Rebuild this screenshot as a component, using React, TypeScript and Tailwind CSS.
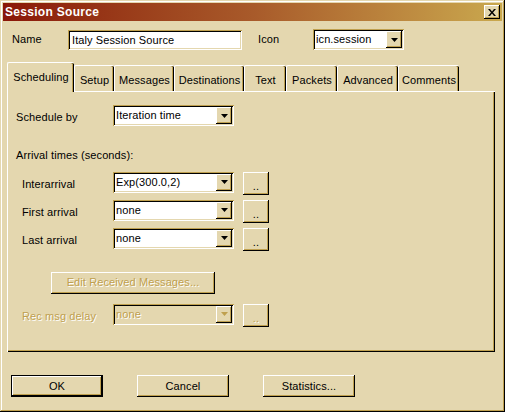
const FACE = 'bg-[#e4d7af]'

const raised =
  'shadow-[inset_-1px_-1px_0_#000,inset_1px_1px_0_#fff,inset_-2px_-2px_0_#bfa04f]'
const sunken =
  'shadow-[inset_1px_1px_0_#bfa04f,inset_-1px_-1px_0_#fff,inset_2px_2px_0_#000,inset_-2px_-2px_0_#e4d7af]'
const disabledText = 'text-[#bfa04f] [text-shadow:1px_1px_0_#fff]'

function Arrow({ disabled }: { disabled?: boolean }) {
  return (
    <div
      className={`flex h-full w-[16px] items-center justify-center ${FACE} ${raised}`}
    >
      <svg width="7" height="4" viewBox="0 0 7 4">
        <path d="M0 0h7L3.5 4z" fill={disabled ? '#bfa04f' : '#000'} />
      </svg>
    </div>
  )
}

function Combo({
  value,
  width,
  disabled,
}: {
  value: string
  width: number
  disabled?: boolean
}) {
  return (
    <div
      className={`flex h-[21px] p-[2px] ${sunken} ${disabled ? FACE : 'bg-white'}`}
      style={{ width }}
    >
      <div
        className={`flex-1 pl-[1px] leading-[17px] ${disabled ? disabledText : 'text-black'}`}
      >
        {value}
      </div>
      <Arrow disabled={disabled} />
    </div>
  )
}

function DotButton({ disabled }: { disabled?: boolean }) {
  return (
    <div
      className={`ml-[9px] flex h-[23px] w-[26px] items-end justify-center pb-[3px] leading-none ${raised} ${disabled ? disabledText : ''}`}
    >
      ..
    </div>
  )
}

function Row({
  label,
  value,
  disabled,
}: {
  label: string
  value: string
  disabled?: boolean
}) {
  return (
    <div className="flex items-start">
      <div
        className={`w-[97px] pl-[6px] pt-[4px] ${disabled ? disabledText : ''}`}
      >
        {label}
      </div>
      <Combo value={value} width={121} disabled={disabled} />
      <DotButton disabled={disabled} />
    </div>
  )
}

const tabs = [
  { name: 'Setup', w: 40 },
  { name: 'Messages', w: 60 },
  { name: 'Destinations', w: 70 },
  { name: 'Text', w: 42 },
  { name: 'Packets', w: 51 },
  { name: 'Advanced', w: 61 },
  { name: 'Comments', w: 61 },
]

function Btn({ label, isDefault }: { label: string; isDefault?: boolean }) {
  return (
    <div
      className={`flex h-[22px] w-[92px] items-center justify-center ${
        isDefault
          ? 'shadow-[inset_0_0_0_1px_#000,inset_-2px_-2px_0_#000,inset_2px_2px_0_#fff,inset_-3px_-3px_0_#bfa04f]'
          : raised
      }`}
    >
      {label}
    </div>
  )
}

export default function App() {
  return (
    <div
      className={`h-[412px] w-[505px] overflow-hidden ${FACE} text-[11px] tracking-[0.1px] text-black shadow-[inset_-1px_-1px_0_#000,inset_1px_1px_0_#e4d7af,inset_-2px_-2px_0_#bfa04f,inset_2px_2px_0_#fff] p-[3px]`}
      style={{ fontFamily: '"Liberation Sans", Arial, sans-serif' }}
    >
      {/* title bar */}
      <div className="flex h-[18px] items-center justify-between bg-gradient-to-r from-[#8a1608] via-[#a85a2a] to-[#c9a84e] pl-[2px] pr-[2px]">
        <span className="text-[12px] font-bold tracking-[0.3px] text-white">
          Session Source
        </span>
        <div
          className={`flex h-[14px] w-[16px] items-center justify-center ${FACE} ${raised}`}
        >
          <svg width="8" height="7" viewBox="0 0 8 7">
            <path
              d="M0 0h2l2 2.5L6 0h2L5 3.5 8 7H6L4 4.5 2 7H0l3-3.5z"
              fill="#000"
            />
          </svg>
        </div>
      </div>

      {/* name row */}
      <div className="mt-[8px] flex items-center">
        <div className="w-[65px] pl-[9px]">Name</div>
        <div
          className={`h-[20px] w-[174px] bg-white p-[2px] pl-[4px] leading-[16px] ${sunken}`}
        >
          Italy Session Source
        </div>
        <div className="w-[71px] pl-[16px]">Icon</div>
        <Combo value="icn.session" width={91} />
      </div>

      {/* tabs */}
      <div className="mt-[12px] flex items-end pl-[4px]">
        <div className="relative z-10 -mb-px flex h-[30px] w-[67px] items-start justify-center rounded-t-[2px] border-t border-l border-white pt-[6px] shadow-[inset_-1px_0_0_#000,inset_-2px_0_0_#bfa04f] bg-[#e4d7af]">
          Scheduling
        </div>
        {tabs.map((t) => (
          <div
            key={t.name}
            className="flex h-[26px] items-start justify-center rounded-t-[2px] border-t border-l border-white pt-[6px] shadow-[inset_-1px_0_0_#000,inset_-2px_0_0_#bfa04f]"
            style={{ width: t.w }}
          >
            {t.name}
          </div>
        ))}
      </div>

      {/* panel */}
      <div className="ml-[4px] h-[261px] w-[488px] border-t border-l border-white shadow-[inset_-1px_-1px_0_#000,inset_-2px_-2px_0_#bfa04f] pl-[8px] pt-[13px]">
        <div className="flex items-start">
          <div className="w-[97px] pt-[4px]">Schedule by</div>
          <Combo value="Iteration time" width={121} />
        </div>
        <div className="mt-[21px]">Arrival times (seconds):</div>
        <div className="mt-[8px] flex flex-col gap-[5px]">
          <Row label="Interarrival" value="Exp(300.0,2)" />
          <Row label="First arrival" value="none" />
          <Row label="Last arrival" value="none" />
        </div>
        <div
          className={`ml-[35px] mt-[21px] flex h-[22px] w-[164px] items-center justify-center ${raised} ${disabledText}`}
        >
          Edit Received Messages...
        </div>
        <div className="mt-[10px]">
          <Row label="Rec msg delay" value="none" disabled />
        </div>
      </div>

      {/* buttons */}
      <div className="ml-[8px] mt-[23px] flex gap-[34px]">
        <Btn label="OK" isDefault />
        <Btn label="Cancel" />
        <Btn label="Statistics..." />
      </div>
    </div>
  )
}
